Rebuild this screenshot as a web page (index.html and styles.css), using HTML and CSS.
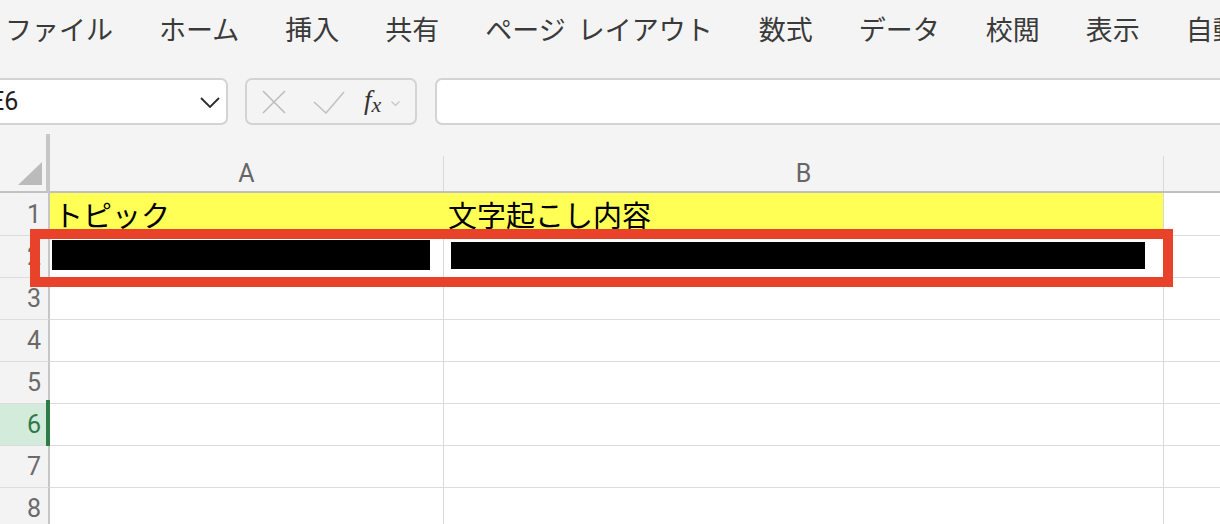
FILE: index.html
```html
<!DOCTYPE html>
<html lang="ja">
<head>
<meta charset="utf-8">
<title>Excel</title>
<link rel="stylesheet" href="styles.css">
</head>
<body>
<div class="menubar">
  <span class="menu-item">ファイル</span>
  <span class="menu-item">ホーム</span>
  <span class="menu-item">挿入</span>
  <span class="menu-item">共有</span>
  <span class="menu-item">ページ レイアウト</span>
  <span class="menu-item">数式</span>
  <span class="menu-item">データ</span>
  <span class="menu-item">校閲</span>
  <span class="menu-item">表示</span>
  <span class="menu-item">自動</span>
</div>

<div class="formula-row">
  <div class="namebox">
    <span class="ref">E6</span>
    <svg class="chev" width="20" height="11" viewBox="0 0 20 11"><polyline points="1,1 10,10 19,1" fill="none" stroke="#2b2b2b" stroke-width="1.8"/></svg>
  </div>
  <div class="fxbox">
    <svg class="ic-x" width="24" height="24" viewBox="0 0 24 24"><path d="M1 1 L23 23 M23 1 L1 23" stroke="#bdbdbd" stroke-width="1.6" fill="none"/></svg>
    <svg class="ic-check" width="32" height="23" viewBox="0 0 32 23"><polyline points="1,11 13,22 31,1" fill="none" stroke="#c2c2c2" stroke-width="1.6"/></svg>
    <span class="fx"><span class="fx-f">f</span><span class="fx-x">x</span></span>
    <svg class="ic-small" width="9" height="5" viewBox="0 0 9 5"><polyline points="0.5,0.5 4.5,4.5 8.5,0.5" fill="none" stroke="#c4c4c4" stroke-width="1.1"/></svg>
  </div>
  <div class="formula-input"></div>
</div>

<div class="sheet">
  <div class="head">
    <div class="corner">
      <svg width="24" height="23" viewBox="0 0 24 23"><polygon points="24,0 24,23 0,23" fill="#bbbbbb"/></svg>
    </div>
    <div class="colheads">
      <div class="ch col-a">A</div>
      <div class="ch col-b">B</div>
      <div class="ch col-c"></div>
    </div>
  </div>

  <div class="row first">
    <div class="rh">1</div>
    <div class="cell col-a fill">トピック</div>
    <div class="cell col-b fill">文字起こし内容</div>
    <div class="cell col-c"></div>
  </div>
  <div class="row">
    <div class="rh">2</div>
    <div class="cell col-a"><div class="redact redact-a"></div></div>
    <div class="cell col-b"><div class="redact redact-b"></div></div>
    <div class="cell col-c"></div>
  </div>
  <div class="row">
    <div class="rh">3</div>
    <div class="cell col-a"></div>
    <div class="cell col-b"></div>
    <div class="cell col-c"></div>
  </div>
  <div class="row">
    <div class="rh">4</div>
    <div class="cell col-a"></div>
    <div class="cell col-b"></div>
    <div class="cell col-c"></div>
  </div>
  <div class="row">
    <div class="rh">5</div>
    <div class="cell col-a"></div>
    <div class="cell col-b"></div>
    <div class="cell col-c"></div>
  </div>
  <div class="row">
    <div class="rh sel">6</div>
    <div class="cell col-a"></div>
    <div class="cell col-b"></div>
    <div class="cell col-c"></div>
  </div>
  <div class="row">
    <div class="rh">7</div>
    <div class="cell col-a"></div>
    <div class="cell col-b"></div>
    <div class="cell col-c"></div>
  </div>
  <div class="row">
    <div class="rh">8</div>
    <div class="cell col-a"></div>
    <div class="cell col-b"></div>
    <div class="cell col-c"></div>
  </div>

  <div class="annot"></div>
</div>
</body>
</html>
```

FILE: styles.css
```css
* { box-sizing: border-box; }

html, body {
  margin: 0;
  padding: 0;
}

body {
  background: #f4f4f4;
  width: 1220px;
  height: 524px;
  overflow: hidden;
  font-family: "Noto Sans CJK JP", "Noto Sans", sans-serif;
}

/* ---------- menu bar ---------- */
.menubar {
  height: 62px;
  display: flex;
  align-items: center;
  gap: 46px;
  padding-left: 5px;
  padding-bottom: 5px;
  white-space: nowrap;
  font-size: 27px;
  line-height: 1;
  color: #3a3a3a;
}

.menu-item {
  word-spacing: 6px;
}

/* ---------- formula row ---------- */
.formula-row {
  margin-top: 16px;
  height: 47px;
  display: flex;
  gap: 17px;
  margin-left: -40px;
  margin-right: -40px;
}

.namebox {
  width: 268px;
  height: 47px;
  background: #ffffff;
  border: 2px solid #d3d3d3;
  border-radius: 7px;
  display: flex;
  align-items: center;
  justify-content: space-between;
  padding: 0 6px 0 28px;
}

.ref {
  font-family: "Roboto", "Noto Sans", sans-serif;
  font-size: 25px;
  color: #1e1e1e;
  line-height: 1;
}

.chev { display: block; margin-top: 2px; }

.fxbox {
  width: 172px;
  height: 47px;
  border: 2px solid #d3d3d3;
  border-radius: 7px;
  display: flex;
  align-items: center;
  padding-left: 15px;
}

.ic-x { display: block; margin-top: 1px; }
.ic-check { display: block; margin-left: 27px; margin-top: 1px; }

.fx {
  margin-left: 19px;
  font-family: "Liberation Serif", "DejaVu Serif", serif;
  font-style: italic;
  color: #333;
  line-height: 1;
  display: flex;
  align-items: flex-end;
  margin-top: -2px;
}
.fx-f { font-size: 27px; }
.fx-x { font-size: 22px; margin-left: 0; position: relative; top: 2px; }

.ic-small { display: block; margin-left: 10px; margin-top: 4px; }

.formula-input {
  flex: 1;
  height: 47px;
  background: #ffffff;
  border: 2px solid #d3d3d3;
  border-radius: 7px;
  margin-left: 1px;
}

/* ---------- sheet ---------- */
.sheet {
  position: relative;
  margin-top: 9px;
}

.head {
  display: flex;
  height: 59px;
}

.corner {
  width: 50px;
  height: 59px;
  border-right: 4px solid #c6c6c6;
  border-bottom: 2px solid #c2c2c2;
  display: flex;
  align-items: flex-end;
  justify-content: flex-end;
  padding: 0 4px 6px 0;
}
.corner svg { display: block; }

.colheads {
  flex: 1;
  align-self: flex-end;
  height: 37px;
  display: flex;
  border-bottom: 2px solid #bfbfbf;
}

.ch {
  display: flex;
  align-items: center;
  justify-content: center;
  font-family: "Roboto", "Noto Sans", sans-serif;
  font-size: 25px;
  color: #666666;
  line-height: 1;
}

.col-a { width: 394px; border-right: 1px solid #d9d9d9; }
.col-b { width: 720px; border-right: 1px solid #d9d9d9; }
.col-c { flex: 1; }

.row {
  display: flex;
  height: 42px;
}
.row.first { height: 43px; }

.rh {
  width: 50px;
  background: #f3f3f3;
  border-right: 2px solid #c6c6c6;
  border-bottom: 1px solid #dcdcdc;
  display: flex;
  align-items: center;
  justify-content: flex-end;
  padding-right: 7px;
  font-family: "Roboto", "Noto Sans", sans-serif;
  font-size: 25px;
  color: #6a6a6a;
  line-height: 1;
  position: relative;
}

.rh.sel {
  background: #d3ebdb;
  color: #2f7a47;
}
.rh.sel::after {
  content: "";
  position: absolute;
  right: -2px;
  top: -4px;
  bottom: -2px;
  width: 4px;
  background: #2f7b48;
}

.cell {
  border-bottom: 1px solid #dcdcdc;
  background: #ffffff;
  display: flex;
  align-items: center;
  padding-left: 4px;
  font-family: "Noto Sans CJK JP", sans-serif;
  font-size: 29px;
  color: #000;
  line-height: 1;
  white-space: nowrap;
}

.cell.fill { background: #ffff55; }
.cell.col-a.fill { border-right-color: #ffff55; }

.redact { background: #000; }
.row .cell:has(.redact) { align-items: flex-start; padding-left: 0; }
.redact-a { margin-left: 2px; margin-top: 4px; width: 378px; height: 30px; }
.redact-b { margin-left: 7px; margin-top: 6px; width: 694px; height: 27px; }

/* annotation overlay */
.annot {
  position: absolute;
  left: 30px;
  top: 95px;
  width: 1143px;
  height: 58px;
  border: 10px solid #e8422a;
}
```
